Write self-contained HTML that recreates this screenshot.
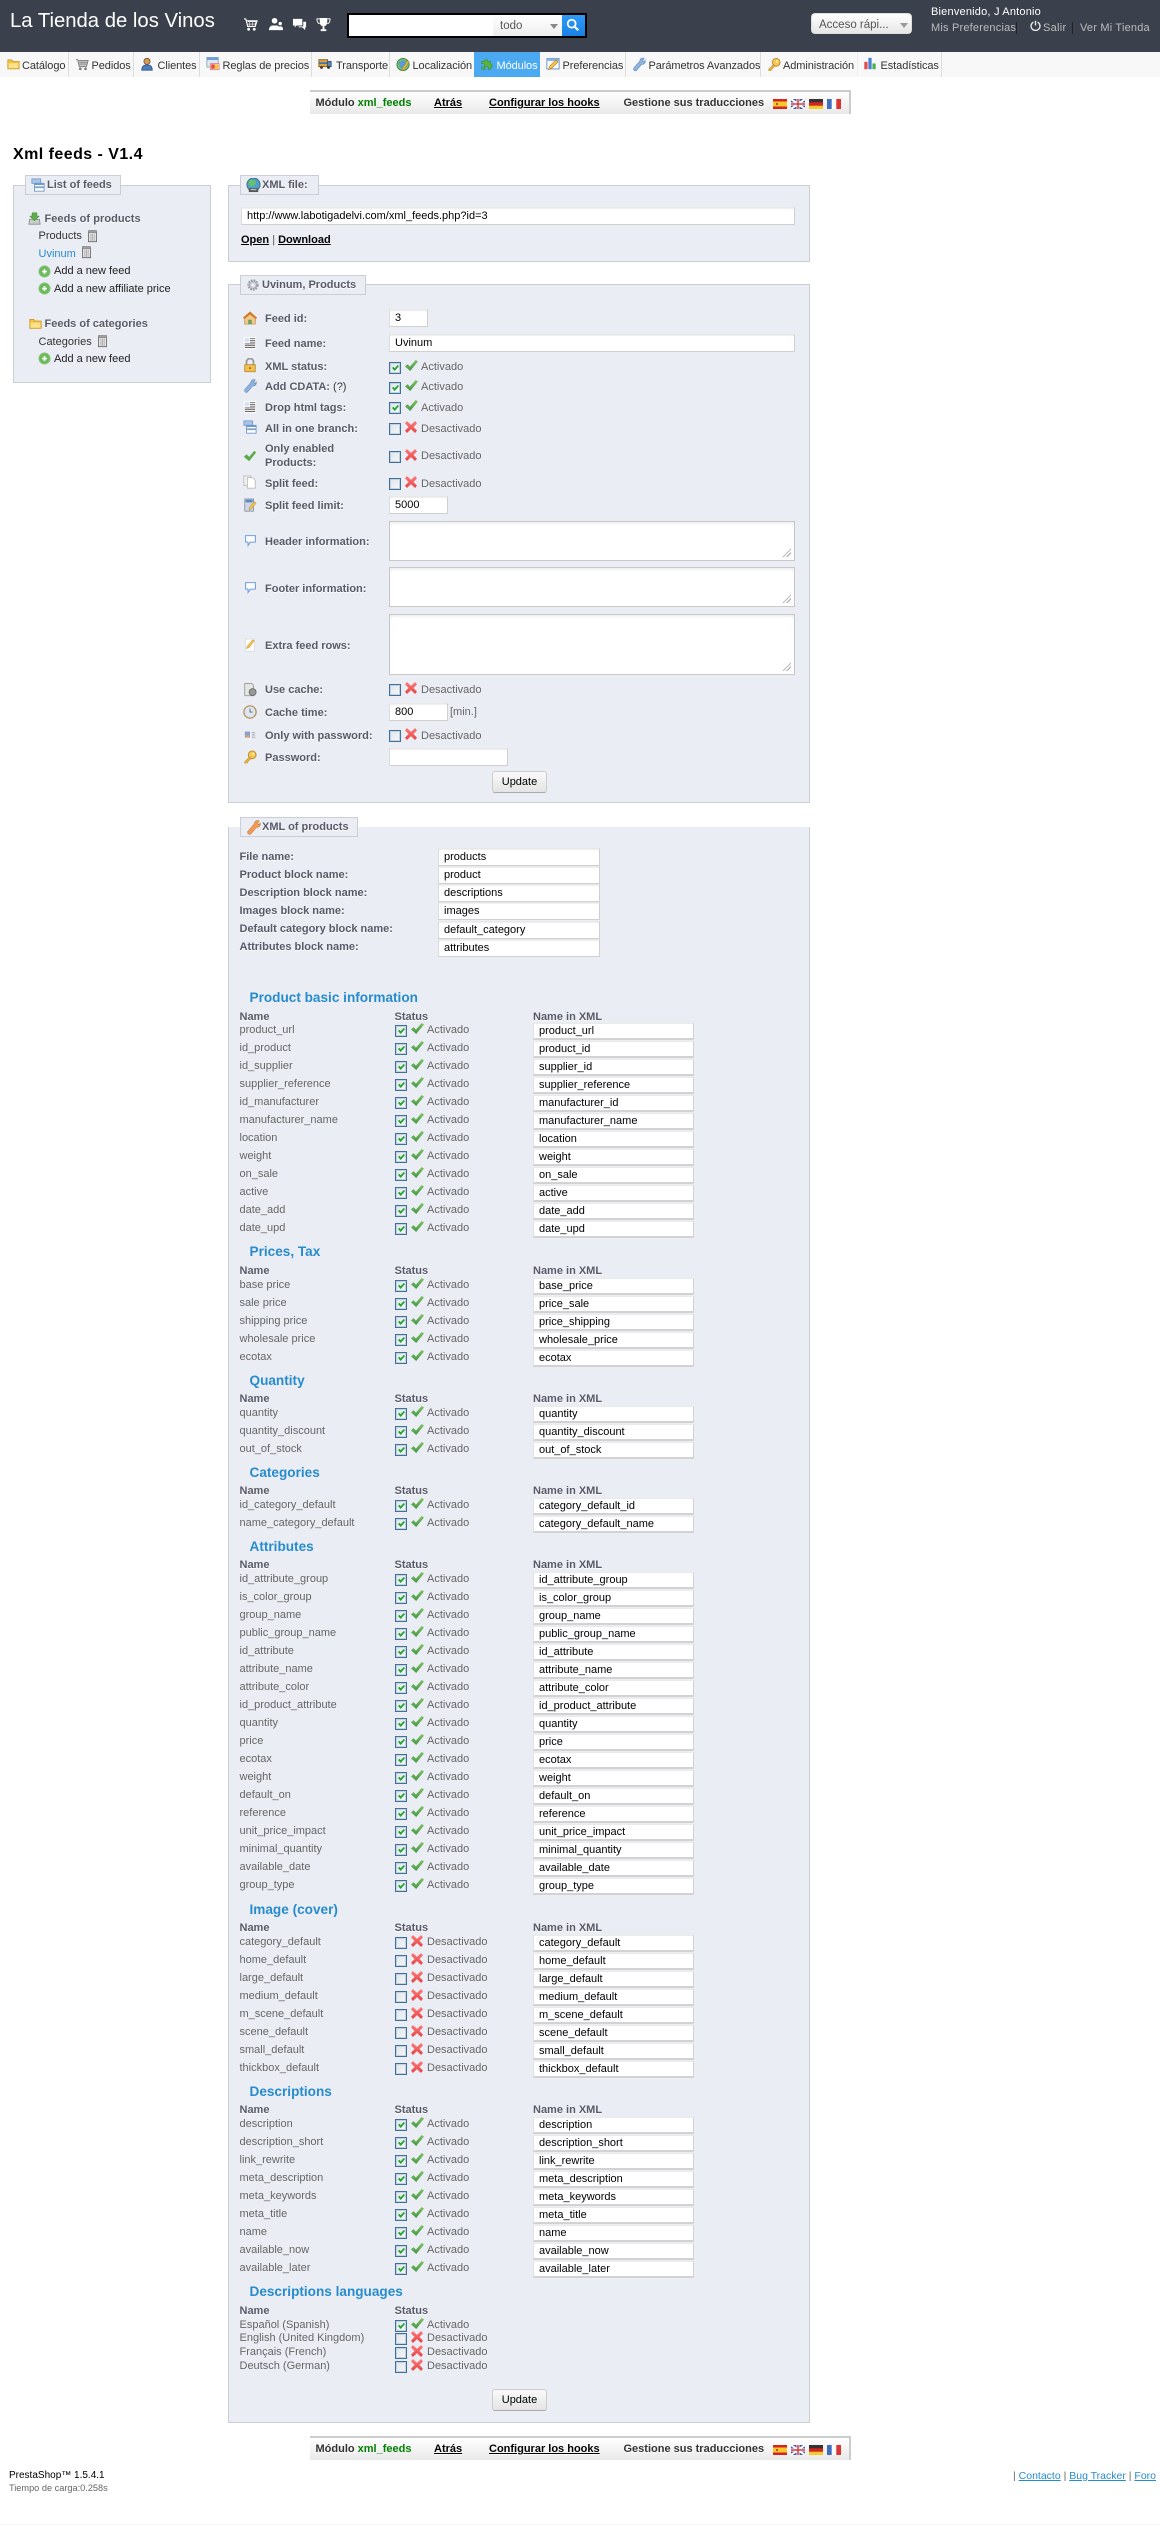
<!DOCTYPE html>
<html lang="es"><head><meta charset="utf-8"><title>Xml feeds</title>
<style>
html,body{margin:0;padding:0;background:#fff}
#p{position:relative;width:1160px;height:2525px;overflow:hidden;font:11px/14px "Liberation Sans",sans-serif;color:#585a69}
#p>*{position:absolute}
.t{white-space:nowrap;margin-top:1px}
.l{white-space:nowrap;font-weight:bold;color:#585a69;text-shadow:0 1px 0 #fff;margin-top:1px}
.f{background:#ebedf4;border:1px solid #ccced7;box-sizing:border-box}
.lg{background:#ebedf4;border:1px solid #ccced7;box-sizing:border-box;height:20px;line-height:18px;font-weight:bold;color:#585a69;white-space:nowrap;padding-left:21px;text-shadow:0 1px 0 #fff}
.lg svg{position:absolute;left:5px;top:2px}
.in{background:#fff;border:1px solid #d0d0d0;border-top-color:#e8e8e8;border-left-color:#ddd;box-sizing:border-box;color:#000;line-height:16px;padding-left:5px;white-space:nowrap;box-shadow:inset 0 1px 1px #eee}
.ta{background:#fff;border:1px solid #c8c8c8;box-sizing:border-box;box-shadow:inset 0 2px 2px #eee}
.ta:after{content:"";position:absolute;right:3px;bottom:3px;width:9px;height:9px;background:linear-gradient(135deg,transparent 50%,#bbb 50%,#bbb 60%,transparent 60%,transparent 72%,#bbb 72%,#bbb 82%,transparent 82%)}
.h{font-weight:bold;font-size:13.6px;line-height:16px;color:#268ccd;white-space:nowrap;left:249.5px;margin-top:1px}
.hd{font-weight:bold;color:#585a69;white-space:nowrap;left:239.5px;text-shadow:0 1px 0 #fff;margin-top:1px}
.btn{left:492px;width:55px;height:22px;box-sizing:border-box;border:1px solid #ccc;border-bottom-color:#aaa;border-radius:3px;background:linear-gradient(#fafafa,#e4e4e4);color:#000;text-align:center;line-height:20px}
.g{left:0;width:1160px}
.r{position:relative;height:18px;line-height:18px;white-space:nowrap}
.r b,.r em,.r u,.r i{position:absolute;font-weight:normal;font-style:normal;text-decoration:none}
.r b{left:239.5px;top:1px;color:#666}
.r em{left:427px;top:1px;color:#666}
.r u{left:533px;top:3px;width:161px;height:17px;background:#fff;border:1px solid #d2d2d2;border-top-color:#eaeaea;border-left-color:#e2e2e2;border-bottom-width:2px;box-sizing:border-box;color:#000;line-height:15px;padding-left:5px}
i.y,i.n,.cb{box-sizing:border-box;width:12px;height:12px;border:1px solid #3f6f9c;background:linear-gradient(135deg,#dfe6ee,#f6f6f6);box-shadow:inset 0 0 0 1px #c4d2de}
.r i.y,.r i.n{left:395px;top:5px}
i.y:before,.cb.y:before{content:"";position:absolute;left:2px;top:2px;width:7px;height:6px;background:#1fa52b;clip-path:polygon(0 50%,20% 30%,38% 55%,82% 0,100% 18%,38% 100%)}
i.y:after,.cb.y:after{content:"";position:absolute;left:15px;top:-3px;width:13px;height:11px;background:linear-gradient(#7cc45f,#47964a);clip-path:polygon(0 58%,20% 38%,38% 60%,82% 0,100% 14%,40% 100%)}
i.n:after,.cb.n:after{content:"";position:absolute;left:15px;top:-3px;width:12px;height:12px;background:linear-gradient(#ff7a7a,#e54444);clip-path:polygon(16% 0,50% 32%,84% 0,100% 20%,70% 50%,100% 80%,84% 100%,50% 68%,16% 100%,0 80%,30% 50%,0 20%)}
.cb{position:absolute}
#hdr{left:0;top:0;width:1160px;height:52px;background:#3a414c}
#nav{left:0;top:52px;width:1160px;height:25px;background:#f8f8f8}
.ns{top:52px;width:1px;height:25px;background:#ddd}
.nt{top:59px;color:#333;white-space:nowrap;line-height:14px;letter-spacing:-.08px}
.tb{left:310px;width:541px;height:24px;box-sizing:border-box;border-top:2px solid #ccc;border-right:2px solid #ccc;background:linear-gradient(#fff,#e9e9e9)}
.tb span{position:absolute;top:4px;white-space:nowrap;font-weight:bold;color:#333;line-height:14px;text-shadow:0 1px 0 #fff}
.tb a{color:#000;text-decoration:underline}
.tb svg{position:absolute;top:7px}
a{color:inherit}
</style></head><body>
<svg width="0" height="0" style="position:absolute"><defs>
<symbol id="folder" viewBox="0 0 16 16"><path d="M1 3h5l1 2h8v9H1z" fill="#f6c23e" stroke="#c99a2a"/><path d="M2 7h12v6H2z" fill="#ffe28a"/></symbol>
<symbol id="cart" viewBox="0 0 16 16"><path d="M1 3h2l2 8h8l2-7H4" fill="#c8c8c8" stroke="#777"/><path d="M5 6h9M5 8h8" stroke="#888"/><circle cx="6" cy="13.5" r="1.5" fill="#777"/><circle cx="12" cy="13.5" r="1.5" fill="#777"/></symbol>
<symbol id="user" viewBox="0 0 16 16"><circle cx="8" cy="5" r="3.5" fill="#d69a5b" stroke="#7a4d22"/><path d="M2 15c0-5 3-6 6-6s6 1 6 6z" fill="#4b7fbf" stroke="#2f5a92"/></symbol>
<symbol id="rules" viewBox="0 0 16 16"><path d="M1 1h13v11H1z" fill="#dfe7f3" stroke="#8aa"/><path d="M1 1h13v3H1z" fill="#6d9fd6"/><path d="M5 8h10v7H5z" fill="#ffe9a8" stroke="#c8a"/><path d="M6 9h4v5H6z" fill="#e44"/><path d="M10 9h4v5h-4z" fill="#f7c23e"/></symbol>
<symbol id="truck" viewBox="0 0 16 16"><path d="M1 3h10v8H1z" fill="#e3a23a" stroke="#805a15"/><path d="M1 6h10v2H1z" fill="#3f74b8"/><path d="M11 5h4v6h-4z" fill="#5b88bf" stroke="#2f4f7a"/><circle cx="4" cy="12" r="1.6" fill="#333"/><circle cx="12" cy="12" r="1.6" fill="#333"/></symbol>
<symbol id="globe" viewBox="0 0 16 16"><circle cx="8" cy="8" r="7" fill="#6fc06a" stroke="#4a7a45"/><path d="M3 6c3-3 6-3 9-1l-2 6-4 2z" fill="#5a9bd8"/><path d="M7 13l6-9 2 1-6 9-2 1z" fill="#f0b840" stroke="#a87c20" stroke-width=".5"/></symbol>
<symbol id="earth" viewBox="0 0 16 16"><circle cx="8" cy="7" r="7" fill="#4e9fd0" stroke="#3c6f70"/><path d="M3 3c3-2 7-1 8 2l-3 4-5-1z" fill="#69c06a"/><path d="M3 11h10v4H3z" fill="#555"/><path d="M5 12h6v1H5z" fill="#ddd"/></symbol>
<symbol id="puzzle" viewBox="0 0 16 16"><path d="M2 5h3a2 2 0 1 1 4 0h3v3a2 2 0 1 1 0 4v2H9a2 2 0 1 0-3 0H2v-3a2 2 0 1 0 0-3z" fill="#59b33b" stroke="#3a8a28" stroke-width=".6"/></symbol>
<symbol id="pref" viewBox="0 0 16 16"><path d="M1 1h14v12H1z" fill="#fff" stroke="#5a8ac4"/><path d="M1 1h14v3H1z" fill="#8db4e2"/><path d="M3 14l1-4 7-7 3 2-7 7z" fill="#f2c14e" stroke="#a57c1d" stroke-width=".6"/></symbol>
<symbol id="wrench" viewBox="0 0 16 16"><path d="M2 12l7-8c0-3 3-4 5-3l-2 3 2 1 1-2c1 3-1 5-4 5l-6 7c-2 1-4-1-3-3z" fill="#8fb2de" stroke="#5a83b8" stroke-width=".6"/></symbol>
<symbol id="wrencho" viewBox="0 0 16 16"><path d="M2 12l7-8c0-3 3-4 5-3l-2 3 2 1 1-2c1 3-1 5-4 5l-6 7c-2 1-4-1-3-3z" fill="#f39a54" stroke="#c87a3a" stroke-width=".6"/></symbol>
<symbol id="key" viewBox="0 0 16 16"><circle cx="10.5" cy="5.5" r="4.5" fill="#f6c652" stroke="#b8892a"/><circle cx="11.5" cy="4.5" r="1.2" fill="#fff6cf"/><path d="M7.5 8L2 13.5V15h2.5l1-1 .5-1.5L9 10z" fill="#f2b93f" stroke="#b8892a" stroke-width=".7"/></symbol>
<symbol id="bars" viewBox="0 0 16 16"><path d="M1 6h4v9H1z" fill="#e44b4b"/><path d="M6 1h4v14H6z" fill="#4a7fd0"/><path d="M11 8h4v7h-4z" fill="#4ab050"/></symbol>
<symbol id="stack" viewBox="0 0 16 16"><path d="M1 1h10v5H1z" fill="#a9c6ea" stroke="#6f99cc"/><path d="M4 6h11v4H4z" fill="#fff" stroke="#6f99cc"/><path d="M4 6h11v2H4z" fill="#6f99cc"/><path d="M4 11h11v4H4z" fill="#fff" stroke="#6f99cc"/></symbol>
<symbol id="gear" viewBox="0 0 16 16"><circle cx="8" cy="8" r="5" fill="#c9cdd4" stroke="#9a9ea6" stroke-width="3" stroke-dasharray="2 1"/><circle cx="8" cy="8" r="2" fill="#eee"/></symbol>
<symbol id="dl" viewBox="0 0 16 16"><path d="M2 9h12l1 6H1z" fill="#c8cfc8" stroke="#889"/><path d="M5 1h6v4h3l-6 6-6-6h3z" fill="#5caf4a" stroke="#3b8432" stroke-width=".6"/></symbol>
<symbol id="trash" viewBox="0 0 16 16"><path d="M3 3h10v12H3z" fill="#e2e2e2" stroke="#666"/><path d="M3 1h10v3H3z" fill="#a0a0a0" stroke="#777" stroke-width=".5"/><path d="M6 5v9M8 5v9M10 5v9" stroke="#aaa"/></symbol>
<symbol id="add" viewBox="0 0 16 16"><circle cx="8" cy="8" r="7" fill="#6cbb5a" stroke="#98c890"/><path d="M5 8h6M8 5v6" stroke="#fff" stroke-width="2"/></symbol>
<symbol id="house" viewBox="0 0 16 16"><path d="M8 1L0 8h2v7h12V8h2z" fill="#f0c98a" stroke="#b97c2e" stroke-width=".7"/><path d="M0 8l8-7 8 7-2 1-6-5-6 5z" fill="#d9772c"/><path d="M6 10h4v5H6z" fill="#6aa05a"/></symbol>
<symbol id="doc" viewBox="0 0 16 16"><path d="M1 1h14v14H1z" fill="#fff"/><path d="M2 2h5v5H2z" fill="#d6e2f2"/><path d="M8 3h6M8 5h6M8 7h6" stroke="#666"/><path d="M2 9h12M2 11h12M2 13h12" stroke="#555"/></symbol>
<symbol id="lock" viewBox="0 0 16 16"><path d="M4 7V4a4 4 0 0 1 8 0v3" fill="none" stroke="#999" stroke-width="2"/><path d="M2 7h12v8H2z" fill="#f2bf52" stroke="#bb8a2a"/><path d="M7 10h2v2H7z" fill="#a06c14"/></symbol>
<symbol id="check" viewBox="0 0 16 16"><path d="M1 9l3-3 3 3 6-7 2 2-8 10z" fill="#5cab4a"/></symbol>
<symbol id="copy" viewBox="0 0 16 16"><path d="M1 1h8v11H1z" fill="#f0f0f0" stroke="#bbb"/><path d="M5 3h6l3 3v9H5z" fill="#fff" stroke="#bbb"/></symbol>
<symbol id="calc" viewBox="0 0 16 16"><path d="M2 1h10v14H2z" fill="#cfd6e6" stroke="#8a93a8"/><path d="M3 2h8v3H3z" fill="#5a86c2"/><path d="M7 14l1-4 5-6 2 2-5 6z" fill="#f2c14e" stroke="#a57c1d" stroke-width=".5"/></symbol>
<symbol id="msg" viewBox="0 0 16 16"><path d="M2 2h12v8H8l-3 4v-4H2z" fill="#fff" stroke="#6fa0dc" stroke-width="1.3"/></symbol>
<symbol id="note" viewBox="0 0 16 16"><path d="M3 1h10v14H3z" fill="#fff" stroke="#ddd"/><path d="M4 12l1-3 6-7 2 1-6 8z" fill="#f2c14e" stroke="#b98a25" stroke-width=".5"/></symbol>
<symbol id="disk" viewBox="0 0 16 16"><path d="M2 1h8l2 2v12H2z" fill="#e6e6e6" stroke="#999"/><circle cx="11" cy="11" r="4" fill="#999" stroke="#666"/></symbol>
<symbol id="clock" viewBox="0 0 16 16"><circle cx="8" cy="8" r="7" fill="#dce6f5" stroke="#b7935a" stroke-width="1.5"/><path d="M8 4v4h3" fill="none" stroke="#666"/></symbol>
<symbol id="card" viewBox="0 0 16 16"><path d="M1 3h14v10H1z" fill="#eef1f6"/><path d="M2 4h6v7H2z" fill="#7fa3d6"/><path d="M3 8h4v3H3z" fill="#e6a05a"/><path d="M10 5h4M10 7h4M10 9h4M10 11h4" stroke="#aab"/></symbol>
<symbol id="pow" viewBox="0 0 16 16"><path d="M5 3a6.5 6.5 0 1 0 6 0" fill="none" stroke="#e8e8e8" stroke-width="2"/><path d="M8 1v7" stroke="#e8e8e8" stroke-width="2"/></symbol>
<symbol id="wc" viewBox="0 0 16 16"><path d="M1 2h2l2 8h8l2-6H4" fill="none" stroke="#fff" stroke-width="1.2"/><path d="M5 5h9M5 7.500h8.500M7 4v6M10 4v6M13 4v6" stroke="#fff" stroke-width=".6"/><circle cx="6" cy="13" r="1.500" fill="#fff"/><circle cx="12" cy="13" r="1.500" fill="#fff"/></symbol>
<symbol id="wu" viewBox="0 0 16 16"><circle cx="7" cy="4" r="3" fill="#fff"/><path d="M1 14c0-4 3-5 3-5h6s3 1 3 5z" fill="#fff"/><circle cx="13" cy="7" r="1.800" fill="#fff"/><path d="M11 14h5c0-3-1-4-2-4h-2z" fill="#fff"/></symbol>
<symbol id="wm" viewBox="0 0 16 16"><path d="M1 2h10v7H5l-2 2V9H1z" fill="#fff"/><path d="M12 5h3v6h-1v3l-3-3H7v-1h5z" fill="#fff"/></symbol>
<symbol id="wt" viewBox="0 0 16 16"><path d="M4 1h8v5a4 4 0 0 1-8 0z" fill="#fff"/><path d="M4 2H1c0 3 1 5 3 5M12 2h3c0 3-1 5-3 5" fill="none" stroke="#fff"/><path d="M7 10h2v3h2v2H5v-2h2z" fill="#fff"/></symbol>
<symbol id="mag" viewBox="0 0 16 16"><circle cx="6.500" cy="6.500" r="4.500" fill="none" stroke="#fff" stroke-width="2"/><path d="M10 10l4 4" stroke="#fff" stroke-width="2.500"/></symbol>
<symbol id="es" viewBox="0 0 14 10" preserveAspectRatio="none"><path d="M0 0h14v10H0z" fill="#d8241f"/><path d="M0 2.500h14v5H0z" fill="#f8c92c"/><path d="M3 4h2v2H3z" fill="#b5561f"/></symbol>
<symbol id="gb" viewBox="0 0 14 10" preserveAspectRatio="none"><path d="M0 0h14v10H0z" fill="#3f5aa8"/><path d="M0 0l14 10M14 0L0 10" stroke="#fff" stroke-width="2"/><path d="M7 0v10M0 5h14" stroke="#fff" stroke-width="3"/><path d="M7 0v10M0 5h14" stroke="#d8383a" stroke-width="1.500"/></symbol>
<symbol id="de" viewBox="0 0 14 10" preserveAspectRatio="none"><path d="M0 0h14v10H0z" fill="#333"/><path d="M0 3.300h14v3.400H0z" fill="#d8241f"/><path d="M0 6.700h14V10H0z" fill="#f6c92c"/></symbol>
<symbol id="fr" viewBox="0 0 14 10" preserveAspectRatio="none"><path d="M0 0h14v10H0z" fill="#fff"/><path d="M0 0h4.700v10H0z" fill="#3f6ec0"/><path d="M9.300 0H14v10H9.300z" fill="#e0322f"/></symbol>
</defs></svg>
<div id="p">

<div id="hdr"></div>
<div class="t" style="left:10px;top:8px;font-size:20.3px;line-height:24px;color:#fff">La Tienda de los Vinos</div>
<svg style="left:243px;top:17px" width="15" height="15"><use href="#wc"/></svg>
<svg style="left:268px;top:17px" width="15" height="15"><use href="#wu"/></svg>
<svg style="left:292px;top:17px" width="15" height="15"><use href="#wm"/></svg>
<svg style="left:316px;top:17px" width="15" height="15"><use href="#wt"/></svg>
<div style="left:347px;top:13px;width:240px;height:25px;background:#000"></div>
<div style="left:349px;top:15px;width:144px;height:21px;background:#fff"></div>
<div style="left:493px;top:15px;width:69px;height:21px;background:linear-gradient(#fff,#eee)"></div>
<div class="t" style="left:500px;top:18px;color:#555;font-size:11.5px">todo</div>
<div style="left:550px;top:24px;border:4px solid transparent;border-top:5px solid #888;border-bottom:0"></div>
<div style="left:562px;top:15px;width:23px;height:21px;background:linear-gradient(#2f9bf5,#1a7fe6)"></div>
<svg style="left:566px;top:18px" width="14" height="14"><use href="#mag"/></svg>
<div style="left:811px;top:13px;width:101px;height:21px;box-sizing:border-box;border:1px solid #ddd;border-radius:4px;background:linear-gradient(#fff,#e6e6e6)"></div>
<div class="t" style="left:819px;top:17px;color:#555;font-size:11.5px">Acceso rápi...</div>
<div style="left:900px;top:23px;border:4px solid transparent;border-top:5px solid #999;border-bottom:0"></div>
<div class="t" style="left:931px;top:4px;color:#fff;letter-spacing:.2px">Bienvenido, J Antonio</div>
<div class="t" style="left:931px;top:20px;color:#bbb;letter-spacing:.2px">Mis Preferencias</div>
<div style="left:1016px;top:22px;width:1px;height:12px;background:#222"></div>
<svg style="left:1030px;top:20px" width="11" height="11"><use href="#pow"/></svg>
<div class="t" style="left:1043px;top:20px;color:#bbb;letter-spacing:.3px">Salir</div>
<div style="left:1072px;top:22px;width:1px;height:12px;background:#222"></div>
<div class="t" style="left:1080px;top:20px;color:#bbb;letter-spacing:.2px">Ver Mi Tienda</div>

<div id="nav"></div>
<div style="left:474px;top:52px;width:66px;height:25px;background:#4aa9f0"></div>
<div class="ns" style="left:68px"></div><div class="ns" style="left:133px"></div><div class="ns" style="left:199px"></div><div class="ns" style="left:311px"></div><div class="ns" style="left:389px"></div><div class="ns" style="left:625px"></div><div class="ns" style="left:760px"></div><div class="ns" style="left:857px;background:#eee"></div><div class="ns" style="left:941px"></div>
<svg style="left:7px;top:57px" width="13" height="14"><use href="#folder"/></svg><div class="nt" style="left:22px">Catálogo</div>
<svg style="left:75px;top:57px" width="14" height="14"><use href="#cart"/></svg><div class="nt" style="left:91.500px">Pedidos</div>
<svg style="left:140px;top:57px" width="14" height="14"><use href="#user"/></svg><div class="nt" style="left:157.500px">Clientes</div>
<svg style="left:206px;top:56px" width="14" height="15"><use href="#rules"/></svg><div class="nt" style="left:222.500px">Reglas de precios</div>
<svg style="left:318px;top:57px" width="14" height="14"><use href="#truck"/></svg><div class="nt" style="left:336px">Transporte</div>
<svg style="left:396px;top:57px" width="14" height="15"><use href="#globe"/></svg><div class="nt" style="left:412.500px">Localización</div>
<svg style="left:480px;top:57px" width="14" height="14"><use href="#puzzle"/></svg><div class="nt" style="left:496.500px;color:#fff">Módulos</div>
<svg style="left:546px;top:57px" width="14" height="15"><use href="#pref"/></svg><div class="nt" style="left:562.500px">Preferencias</div>
<svg style="left:632px;top:57px" width="14" height="15"><use href="#wrench"/></svg><div class="nt" style="left:648.500px">Parámetros Avanzados</div>
<svg style="left:767px;top:57px" width="14" height="15"><use href="#key"/></svg><div class="nt" style="left:783px">Administración</div>
<svg style="left:863px;top:57px" width="14" height="13"><use href="#bars"/></svg><div class="nt" style="left:880.500px">Estadísticas</div>

<div class="tb" style="top:90px">
<span style="left:5.500px">Módulo <span style="position:static;color:#008000;text-shadow:none">xml_feeds</span></span>
<span style="left:124px"><a href="#">Atrás</a></span>
<span style="left:179px"><a href="#">Configurar los hooks</a></span>
<span style="left:313.500px">Gestione sus traducciones</span>
<svg style="left:463px" width="14" height="10"><use href="#es"/></svg><svg style="left:481px" width="14" height="10"><use href="#gb"/></svg><svg style="left:499px" width="14" height="10"><use href="#de"/></svg><svg style="left:517px" width="14" height="10"><use href="#fr"/></svg>
</div>

<div class="t" style="left:13px;top:145px;font-weight:bold;font-size:16px;line-height:18px;color:#000;letter-spacing:.45px">Xml feeds - V1.4</div>

<!-- left -->
<div class="f" style="left:13px;top:185px;width:198px;height:198px"></div>
<div class="lg" style="left:25px;top:175px;width:96px;position:absolute"><svg width="14" height="14"><use href="#stack"/></svg>List of feeds</div>
<svg style="left:28px;top:212px" width="13" height="13"><use href="#dl"/></svg>
<div class="l" style="left:44.500px;top:211px;letter-spacing:.05px">Feeds of products</div>
<div class="t" style="left:38.500px;top:228px;color:#333">Products</div>
<svg style="left:86px;top:229px" width="13" height="14"><use href="#trash"/></svg>
<div class="t" style="left:38.500px;top:246px;color:#268ccd">Uvinum</div>
<svg style="left:80px;top:245px" width="13" height="14"><use href="#trash"/></svg>
<svg style="left:38px;top:265px" width="13" height="13"><use href="#add"/></svg>
<div class="t" style="left:54px;top:263px;color:#222">Add a new feed</div>
<svg style="left:38px;top:282px" width="13" height="13"><use href="#add"/></svg>
<div class="t" style="left:54px;top:281px;color:#222">Add a new affiliate price</div>
<svg style="left:29px;top:317px" width="13" height="13"><use href="#folder"/></svg>
<div class="l" style="left:44.500px;top:316px">Feeds of categories</div>
<div class="t" style="left:38.500px;top:334px;color:#333">Categories</div>
<svg style="left:96px;top:334px" width="13" height="14"><use href="#trash"/></svg>
<svg style="left:38px;top:352px" width="13" height="13"><use href="#add"/></svg>
<div class="t" style="left:54px;top:351px;color:#222">Add a new feed</div>

<!-- XML file -->
<div class="f" style="left:228px;top:185px;width:582px;height:77px"></div>
<div class="lg" style="left:240px;top:175px;width:79px;position:absolute"><svg width="15" height="15"><use href="#earth"/></svg>XML file:</div>
<div class="in" style="left:241px;top:207px;width:554px;height:18px">http://www.labotigadelvi.com/xml_feeds.php?id=3</div>
<div class="t" style="left:241px;top:232px;font-weight:bold;color:#000"><a href="#">Open</a> <span style="font-weight:normal;color:#555">|</span> <a href="#">Download</a></div>

<!-- Uvinum -->
<div class="f" style="left:228px;top:284px;width:582px;height:519px"></div>
<div class="lg" style="left:240px;top:275px;width:126px;position:absolute"><svg width="14" height="14"><use href="#gear"/></svg>Uvinum, Products</div>

<svg style="left:243px;top:311px" width="14" height="14"><use href="#house"/></svg><div class="l" style="left:265px;top:311px">Feed id:</div>
<div class="in" style="left:389px;top:309px;width:39px;height:18px">3</div>
<svg style="left:243px;top:336px" width="14" height="14"><use href="#doc"/></svg><div class="l" style="left:265px;top:336px">Feed name:</div>
<div class="in" style="left:389px;top:334px;width:406px;height:18px">Uvinum</div>

<svg style="left:243px;top:358px" width="14" height="15"><use href="#lock"/></svg><div class="l" style="left:265px;top:359px">XML status:</div>
<div class="cb y" style="left:389px;top:362px"></div><div class="t" style="left:421px;top:359px;color:#666">Activado</div>
<svg style="left:243px;top:379px" width="14" height="14"><use href="#wrench"/></svg><div class="l" style="left:265px;top:379px">Add CDATA: <span style="font-weight:normal;color:#333">(?)</span></div>
<div class="cb y" style="left:389px;top:382px"></div><div class="t" style="left:421px;top:379px;color:#666">Activado</div>
<svg style="left:243px;top:400px" width="14" height="14"><use href="#doc"/></svg><div class="l" style="left:265px;top:400px">Drop html tags:</div>
<div class="cb y" style="left:389px;top:402px"></div><div class="t" style="left:421px;top:400px;color:#666">Activado</div>
<svg style="left:243px;top:420px" width="14" height="14"><use href="#stack"/></svg><div class="l" style="left:265px;top:421px">All in one branch:</div>
<div class="cb n" style="left:389px;top:423px"></div><div class="t" style="left:421px;top:421px;color:#666">Desactivado</div>
<svg style="left:243px;top:449px" width="14" height="14"><use href="#check"/></svg><div class="l" style="left:265px;top:441px">Only enabled<br>Products:</div>
<div class="cb n" style="left:389px;top:451px"></div><div class="t" style="left:421px;top:448px;color:#666">Desactivado</div>
<svg style="left:243px;top:475px" width="14" height="14"><use href="#copy"/></svg><div class="l" style="left:265px;top:476px">Split feed:</div>
<div class="cb n" style="left:389px;top:478px"></div><div class="t" style="left:421px;top:476px;color:#666">Desactivado</div>

<svg style="left:243px;top:498px" width="14" height="14"><use href="#calc"/></svg><div class="l" style="left:265px;top:498px">Split feed limit:</div>
<div class="in" style="left:389px;top:496px;width:59px;height:18px">5000</div>
<svg style="left:244px;top:534px" width="13" height="13"><use href="#msg"/></svg><div class="l" style="left:265px;top:534px">Header information:</div>
<div class="ta" style="left:389px;top:521px;width:406px;height:40px"></div>
<svg style="left:244px;top:581px" width="13" height="13"><use href="#msg"/></svg><div class="l" style="left:265px;top:581px">Footer information:</div>
<div class="ta" style="left:389px;top:567px;width:406px;height:40px"></div>
<svg style="left:243px;top:638px" width="14" height="14"><use href="#note"/></svg><div class="l" style="left:265px;top:638px">Extra feed rows:</div>
<div class="ta" style="left:389px;top:614px;width:406px;height:61px"></div>
<svg style="left:243px;top:682px" width="14" height="15"><use href="#disk"/></svg><div class="l" style="left:265px;top:682px">Use cache:</div>
<div class="cb n" style="left:389px;top:684px"></div><div class="t" style="left:421px;top:682px;color:#666">Desactivado</div>
<svg style="left:243px;top:705px" width="14" height="14"><use href="#clock"/></svg><div class="l" style="left:265px;top:705px">Cache time:</div>
<div class="in" style="left:389px;top:703px;width:59px;height:18px">800</div>
<div class="t" style="left:450px;top:704px;color:#666">[min.]</div>
<svg style="left:243px;top:728px" width="14" height="14"><use href="#card"/></svg><div class="l" style="left:265px;top:728px">Only with password:</div>
<div class="cb n" style="left:389px;top:730px"></div><div class="t" style="left:421px;top:728px;color:#666">Desactivado</div>
<svg style="left:243px;top:750px" width="14" height="14"><use href="#key"/></svg><div class="l" style="left:265px;top:750px">Password:</div>
<div class="in" style="left:389px;top:748px;width:119px;height:18px"></div>
<div class="btn" style="top:771px">Update</div>

<!-- XML of products -->
<div class="f" style="left:228px;top:827px;width:582px;height:1596px;border-top:0"></div>
<div class="lg" style="left:240px;top:817px;width:118px;position:absolute"><svg width="15" height="15"><use href="#wrencho"/></svg>XML of products</div>

<div class="l" style="left:239.500px;top:849px">File name:</div><div class="in" style="left:438px;top:848px;width:162px;height:18px">products</div>
<div class="l" style="left:239.500px;top:867px">Product block name:</div><div class="in" style="left:438px;top:866px;width:162px;height:18px">product</div>
<div class="l" style="left:239.500px;top:885px">Description block name:</div><div class="in" style="left:438px;top:884px;width:162px;height:18px">descriptions</div>
<div class="l" style="left:239.500px;top:903px">Images block name:</div><div class="in" style="left:438px;top:902px;width:162px;height:18px">images</div>
<div class="l" style="left:239.500px;top:921px">Default category block name:</div><div class="in" style="left:438px;top:921px;width:162px;height:18px">default_category</div>
<div class="l" style="left:239.500px;top:939px">Attributes block name:</div><div class="in" style="left:438px;top:939px;width:162px;height:18px">attributes</div>

<div class="h" style="top:989px">Product basic information</div>
<div class="hd" style="top:1009px">Name</div><div class="hd" style="left:394.500px;top:1009px">Status</div><div class="hd" style="left:533px;top:1009px">Name in XML</div>
<div class="g" style="top:1020px">
<div class="r"><b>product_url</b><i class="y"></i><em>Activado</em><u>product_url</u></div>
<div class="r"><b>id_product</b><i class="y"></i><em>Activado</em><u>product_id</u></div>
<div class="r"><b>id_supplier</b><i class="y"></i><em>Activado</em><u>supplier_id</u></div>
<div class="r"><b>supplier_reference</b><i class="y"></i><em>Activado</em><u>supplier_reference</u></div>
<div class="r"><b>id_manufacturer</b><i class="y"></i><em>Activado</em><u>manufacturer_id</u></div>
<div class="r"><b>manufacturer_name</b><i class="y"></i><em>Activado</em><u>manufacturer_name</u></div>
<div class="r"><b>location</b><i class="y"></i><em>Activado</em><u>location</u></div>
<div class="r"><b>weight</b><i class="y"></i><em>Activado</em><u>weight</u></div>
<div class="r"><b>on_sale</b><i class="y"></i><em>Activado</em><u>on_sale</u></div>
<div class="r"><b>active</b><i class="y"></i><em>Activado</em><u>active</u></div>
<div class="r"><b>date_add</b><i class="y"></i><em>Activado</em><u>date_add</u></div>
<div class="r"><b>date_upd</b><i class="y"></i><em>Activado</em><u>date_upd</u></div>
</div>

<div class="h" style="top:1243px">Prices, Tax</div>
<div class="hd" style="top:1263px">Name</div><div class="hd" style="left:394.500px;top:1263px">Status</div><div class="hd" style="left:533px;top:1263px">Name in XML</div>
<div class="g" style="top:1275px">
<div class="r"><b>base price</b><i class="y"></i><em>Activado</em><u>base_price</u></div>
<div class="r"><b>sale price</b><i class="y"></i><em>Activado</em><u>price_sale</u></div>
<div class="r"><b>shipping price</b><i class="y"></i><em>Activado</em><u>price_shipping</u></div>
<div class="r"><b>wholesale price</b><i class="y"></i><em>Activado</em><u>wholesale_price</u></div>
<div class="r"><b>ecotax</b><i class="y"></i><em>Activado</em><u>ecotax</u></div>
</div>

<div class="h" style="top:1372px">Quantity</div>
<div class="hd" style="top:1391px">Name</div><div class="hd" style="left:394.500px;top:1391px">Status</div><div class="hd" style="left:533px;top:1391px">Name in XML</div>
<div class="g" style="top:1403px">
<div class="r"><b>quantity</b><i class="y"></i><em>Activado</em><u>quantity</u></div>
<div class="r"><b>quantity_discount</b><i class="y"></i><em>Activado</em><u>quantity_discount</u></div>
<div class="r"><b>out_of_stock</b><i class="y"></i><em>Activado</em><u>out_of_stock</u></div>
</div>

<div class="h" style="top:1464px">Categories</div>
<div class="hd" style="top:1483px">Name</div><div class="hd" style="left:394.500px;top:1483px">Status</div><div class="hd" style="left:533px;top:1483px">Name in XML</div>
<div class="g" style="top:1495px">
<div class="r"><b>id_category_default</b><i class="y"></i><em>Activado</em><u>category_default_id</u></div>
<div class="r"><b>name_category_default</b><i class="y"></i><em>Activado</em><u>category_default_name</u></div>
</div>

<div class="h" style="top:1538px">Attributes</div>
<div class="hd" style="top:1557px">Name</div><div class="hd" style="left:394.500px;top:1557px">Status</div><div class="hd" style="left:533px;top:1557px">Name in XML</div>
<div class="g" style="top:1569px">
<div class="r"><b>id_attribute_group</b><i class="y"></i><em>Activado</em><u>id_attribute_group</u></div>
<div class="r"><b>is_color_group</b><i class="y"></i><em>Activado</em><u>is_color_group</u></div>
<div class="r"><b>group_name</b><i class="y"></i><em>Activado</em><u>group_name</u></div>
<div class="r"><b>public_group_name</b><i class="y"></i><em>Activado</em><u>public_group_name</u></div>
<div class="r"><b>id_attribute</b><i class="y"></i><em>Activado</em><u>id_attribute</u></div>
<div class="r"><b>attribute_name</b><i class="y"></i><em>Activado</em><u>attribute_name</u></div>
<div class="r"><b>attribute_color</b><i class="y"></i><em>Activado</em><u>attribute_color</u></div>
<div class="r"><b>id_product_attribute</b><i class="y"></i><em>Activado</em><u>id_product_attribute</u></div>
<div class="r"><b>quantity</b><i class="y"></i><em>Activado</em><u>quantity</u></div>
<div class="r"><b>price</b><i class="y"></i><em>Activado</em><u>price</u></div>
<div class="r"><b>ecotax</b><i class="y"></i><em>Activado</em><u>ecotax</u></div>
<div class="r"><b>weight</b><i class="y"></i><em>Activado</em><u>weight</u></div>
<div class="r"><b>default_on</b><i class="y"></i><em>Activado</em><u>default_on</u></div>
<div class="r"><b>reference</b><i class="y"></i><em>Activado</em><u>reference</u></div>
<div class="r"><b>unit_price_impact</b><i class="y"></i><em>Activado</em><u>unit_price_impact</u></div>
<div class="r"><b>minimal_quantity</b><i class="y"></i><em>Activado</em><u>minimal_quantity</u></div>
<div class="r"><b>available_date</b><i class="y"></i><em>Activado</em><u>available_date</u></div>
<div class="r"><b>group_type</b><i class="y"></i><em>Activado</em><u>group_type</u></div>
</div>

<div class="h" style="top:1901px">Image (cover)</div>
<div class="hd" style="top:1920px">Name</div><div class="hd" style="left:394.500px;top:1920px">Status</div><div class="hd" style="left:533px;top:1920px">Name in XML</div>
<div class="g" style="top:1932px">
<div class="r"><b>category_default</b><i class="n"></i><em>Desactivado</em><u>category_default</u></div>
<div class="r"><b>home_default</b><i class="n"></i><em>Desactivado</em><u>home_default</u></div>
<div class="r"><b>large_default</b><i class="n"></i><em>Desactivado</em><u>large_default</u></div>
<div class="r"><b>medium_default</b><i class="n"></i><em>Desactivado</em><u>medium_default</u></div>
<div class="r"><b>m_scene_default</b><i class="n"></i><em>Desactivado</em><u>m_scene_default</u></div>
<div class="r"><b>scene_default</b><i class="n"></i><em>Desactivado</em><u>scene_default</u></div>
<div class="r"><b>small_default</b><i class="n"></i><em>Desactivado</em><u>small_default</u></div>
<div class="r"><b>thickbox_default</b><i class="n"></i><em>Desactivado</em><u>thickbox_default</u></div>
</div>

<div class="h" style="top:2083px">Descriptions</div>
<div class="hd" style="top:2102px">Name</div><div class="hd" style="left:394.500px;top:2102px">Status</div><div class="hd" style="left:533px;top:2102px">Name in XML</div>
<div class="g" style="top:2114px">
<div class="r"><b>description</b><i class="y"></i><em>Activado</em><u>description</u></div>
<div class="r"><b>description_short</b><i class="y"></i><em>Activado</em><u>description_short</u></div>
<div class="r"><b>link_rewrite</b><i class="y"></i><em>Activado</em><u>link_rewrite</u></div>
<div class="r"><b>meta_description</b><i class="y"></i><em>Activado</em><u>meta_description</u></div>
<div class="r"><b>meta_keywords</b><i class="y"></i><em>Activado</em><u>meta_keywords</u></div>
<div class="r"><b>meta_title</b><i class="y"></i><em>Activado</em><u>meta_title</u></div>
<div class="r"><b>name</b><i class="y"></i><em>Activado</em><u>name</u></div>
<div class="r"><b>available_now</b><i class="y"></i><em>Activado</em><u>available_now</u></div>
<div class="r"><b>available_later</b><i class="y"></i><em>Activado</em><u>available_later</u></div>
</div>

<div class="h" style="top:2283px">Descriptions languages</div>
<div class="hd" style="top:2303px">Name</div><div class="hd" style="left:394.500px;top:2303px">Status</div>
<div class="g" style="top:2315px"><div class="r"><b>Español (Spanish)</b><i class="y"></i><em>Activado</em></div></div>
<div class="g" style="top:2328px"><div class="r"><b>English (United Kingdom)</b><i class="n"></i><em>Desactivado</em></div></div>
<div class="g" style="top:2342px"><div class="r"><b>Français (French)</b><i class="n"></i><em>Desactivado</em></div></div>
<div class="g" style="top:2356px"><div class="r"><b>Deutsch (German)</b><i class="n"></i><em>Desactivado</em></div></div>
<div class="btn" style="top:2389px">Update</div>

<div class="tb" style="top:2436px">
<span style="left:5.500px">Módulo <span style="position:static;color:#008000;text-shadow:none">xml_feeds</span></span>
<span style="left:124px"><a href="#">Atrás</a></span>
<span style="left:179px"><a href="#">Configurar los hooks</a></span>
<span style="left:313.500px">Gestione sus traducciones</span>
<svg style="left:463px" width="14" height="10"><use href="#es"/></svg><svg style="left:481px" width="14" height="10"><use href="#gb"/></svg><svg style="left:499px" width="14" height="10"><use href="#de"/></svg><svg style="left:517px" width="14" height="10"><use href="#fr"/></svg>
</div>

<div class="t" style="left:9px;top:2468px;font-size:10px;color:#000">PrestaShop™ 1.5.4.1</div>
<div class="t" style="left:9px;top:2480px;font-size:9.200px;color:#666">Tiempo de carga:0.258s</div>
<div class="t" style="left:1013px;top:2468px;font-size:10.500px;color:#666">| <a href="#" style="color:#268ccd">Contacto</a> | <a href="#" style="color:#268ccd">Bug Tracker</a> | <a href="#" style="color:#268ccd">Foro</a></div>
<div style="left:0;top:2524px;width:1160px;height:1px;background:#f4f4f4"></div>
</div>
</body></html>
